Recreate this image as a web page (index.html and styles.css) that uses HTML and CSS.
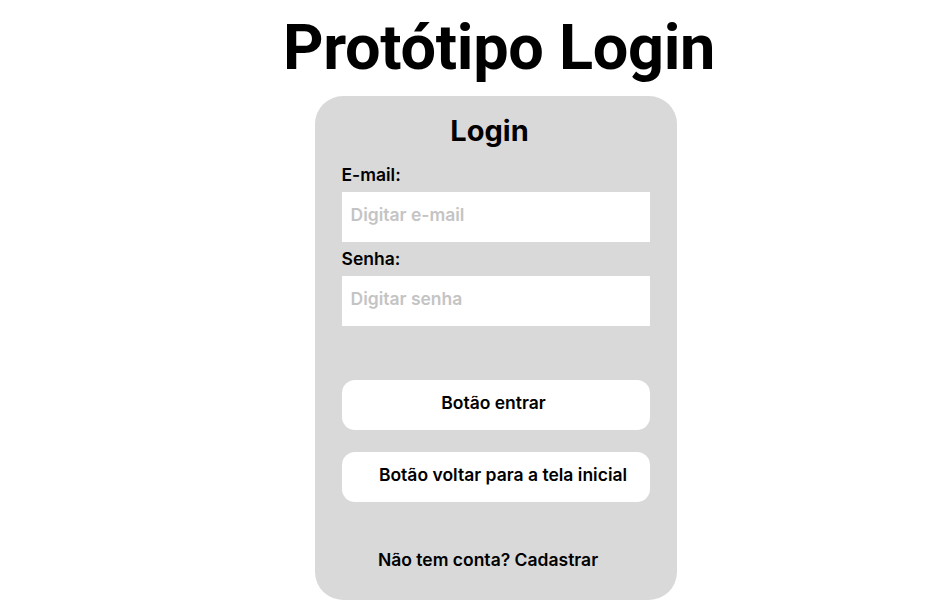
FILE: index.html
```html
<!DOCTYPE html>
<html lang="pt-BR">
<head>
<meta charset="utf-8">
<title>Protótipo Login</title>
<link rel="stylesheet" href="styles.css">
</head>
<body>
<main class="page">
  <h1 class="page-title">Protótipo Login</h1>
  <section class="card">
    <h2 class="card-title">Login</h2>
    <label class="field-label" for="email">E-mail:</label>
    <input class="field-input" id="email" type="text" placeholder="Digitar e-mail">
    <label class="field-label field-label--second" for="senha">Senha:</label>
    <input class="field-input" id="senha" type="text" placeholder="Digitar senha">
    <button class="btn btn--primary" type="button">Botão entrar</button>
    <button class="btn btn--back" type="button">Botão voltar para a tela inicial</button>
    <p class="signup">Não tem conta? Cadastrar</p>
  </section>
</main>
</body>
</html>
```

FILE: styles.css
```css
* { box-sizing: border-box; }
html, body { margin: 0; padding: 0; background: #ffffff; }
body {
  font-family: "Inter", "Roboto", sans-serif;
  color: #000;
}
.page {
  display: flex;
  flex-direction: column;
  align-items: center;
}
.page-title {
  margin: 12px 0 0 0;
  font-family: "Roboto", "Inter", sans-serif;
  font-weight: 700;
  font-size: 63px;
  line-height: 72px;
  letter-spacing: -0.3px;
  padding-left: 67px;
}
.card {
  margin: 12px 0 0 60px;
  width: 362px;
  height: 504px;
  background: #d9d9d9;
  border-radius: 28px;
  display: flex;
  flex-direction: column;
  padding: 15px 27px 0 27px;
}
.card-title {
  margin: 0;
  text-align: center;
  font-size: 29px;
  font-weight: 700;
  line-height: 40px;
  padding-right: 12px;
}
.field-label {
  margin-top: 14px;
  font-size: 17.5px;
  font-weight: 600;
  line-height: 20px;
}
.field-label--second { margin-top: 7px; }
.field-input {
  margin-top: 7px;
  width: 308px;
  height: 50px;
  border: none;
  outline: none;
  background: #fff;
  padding: 0 9px 5px 9px;
  font-family: "Inter", sans-serif;
  font-size: 17.5px;
  font-weight: 600;
  color: #000;
}
.field-input::placeholder { color: #c4c4c4; }
.btn {
  width: 308px;
  height: 50px;
  border: none;
  border-radius: 13px;
  background: #fff;
  font-family: "Inter", sans-serif;
  font-size: 17.5px;
  font-weight: 600;
  color: #000;
  padding: 0 0 6px 0;
  cursor: pointer;
}
.btn--primary { margin-top: 54px; padding-right: 4px; }
.btn--back { margin-top: 22px; padding-left: 15px; }
.signup {
  margin: 48px 0 0 0;
  font-size: 17.5px;
  font-weight: 600;
  line-height: 20px;
  text-align: center;
  padding-right: 15px;
}
```
